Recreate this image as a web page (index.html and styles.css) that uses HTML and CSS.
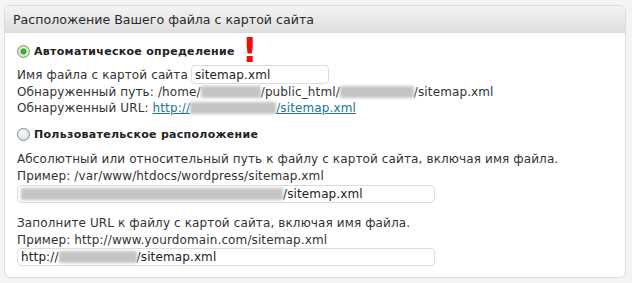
FILE: index.html
```html
<!DOCTYPE html>
<html>
<head>
<meta charset="utf-8">
<link rel="stylesheet" href="styles.css">
</head>
<body>
<div class="box">
  <div class="hdr">Расположение Вашего файла с картой сайта</div>
  <div class="content">
    <div class="radio-row r1">
      <span class="radio checked"></span>
      <span class="rlabel">Автоматическое определение</span>
      <span class="mark">!</span>
    </div>
    <div class="input-row">
      <span>Имя файла с картой сайта</span>
      <span class="field f-short">sitemap.xml</span>
    </div>
    <div class="line">Обнаруженный путь: /home/<span class="blur b1"></span>/public_html/<span class="blur b2"></span>/sitemap.xml</div>
    <div class="line">Обнаруженный URL: <a class="link" href="#">http://<span class="blur b3"></span>/sitemap.xml</a></div>

    <div class="radio-row r2">
      <span class="radio"></span>
      <span class="rlabel">Пользовательское расположение</span>
    </div>
    <div class="line tall first">Абсолютный или относительный путь к файлу с картой сайта, включая имя файла.</div>
    <div class="line tall">Пример: /var/www/htdocs/wordpress/sitemap.xml</div>
    <div class="field f-long"><span class="blur b4"></span>/sitemap.xml</div>

    <div class="line tall second">Заполните URL к файлу с картой сайта, включая имя файла.</div>
    <div class="line">Пример: http://www.yourdomain.com/sitemap.xml</div>
    <div class="field f-long">http://<span class="blur b5"></span>/sitemap.xml</div>
  </div>
</div>
</body>
</html>
```
FILE: styles.css
```css
html, body {
  margin: 0;
  padding: 0;
}
body {
  background: #f4f4f4;
  font-family: "DejaVu Sans", Verdana, sans-serif;
  font-size: 12px;
  letter-spacing: 0.12px;
  color: #333;
  width: 632px;
  height: 283px;
  overflow: hidden;
}
.box {
  margin: 5px 0 0 4px;
  width: 620px;
  background: #fff;
  border: 1px solid #dcdcdc;
  border-radius: 6px;
  overflow: hidden;
}
.hdr {
  height: 26px;
  line-height: 27px;
  padding-left: 8px;
  font-size: 12.6px;
  letter-spacing: 0;
  color: #2a2a2a;
  background: linear-gradient(#f4f4f4, #dedede);
  border-bottom: 1px solid #dcdcdc;
}
.content {
  padding: 10px 12px 11px 12px;
}
.radio-row {
  display: flex;
  align-items: center;
  height: 16px;
  position: relative;
}
.r2 {
  margin-top: 10px;
}
.radio {
  width: 11px;
  height: 11px;
  border: 1px solid #7d8c98;
  border-radius: 50%;
  background: radial-gradient(circle at 40% 35%, #ffffff, #d6dde3 80%);
  margin-right: 4px;
}
.radio.checked {
  border-color: #8a9a6e;
  background: radial-gradient(circle at 50% 50%, #3db83d 0, #2fa52f 2.5px, #e7efd8 3.5px, #c8d6ad 80%);
}
.rlabel {
  font-weight: bold;
  font-size: 11px;
  letter-spacing: 0.3px;
  color: #222;
}
.mark {
  position: absolute;
  left: 225px;
  top: -10px;
  color: #e81010;
  font-weight: bold;
  font-size: 34px;
  line-height: 34px;
  letter-spacing: 0;
  font-family: "DejaVu Sans", sans-serif;
}
.input-row {
  display: flex;
  align-items: center;
  margin-top: 6px;
  height: 19px;
}
.input-row > span:first-child {
  margin-right: 3px;
}
.field {
  box-sizing: border-box;
  border: 1px solid #dcdcdc;
  border-radius: 4px;
  background: #fff;
  padding: 0 3px;
  color: #222;
  display: flex;
  align-items: center;
}
.f-short {
  width: 138px;
  height: 19px;
}
.f-long {
  width: 418px;
  height: 18px;
}
.line {
  height: 16px;
  line-height: 16px;
  white-space: nowrap;
}
.line.tall {
  height: 17px;
  line-height: 17px;
}
.first {
  margin-top: 9px;
}
.second {
  margin-top: 12px;
}
.link {
  color: #21759b;
  text-decoration: underline;
}
.blur {
  display: inline-block;
  height: 12px;
  background: #c4c4c4;
  filter: blur(1.5px);
  vertical-align: -2px;
}
.b1 { width: 60px; }
.b2 { width: 74px; }
.b3 { width: 86px; }
.b4 { width: 262px; }
.b5 { width: 78px; }
```
